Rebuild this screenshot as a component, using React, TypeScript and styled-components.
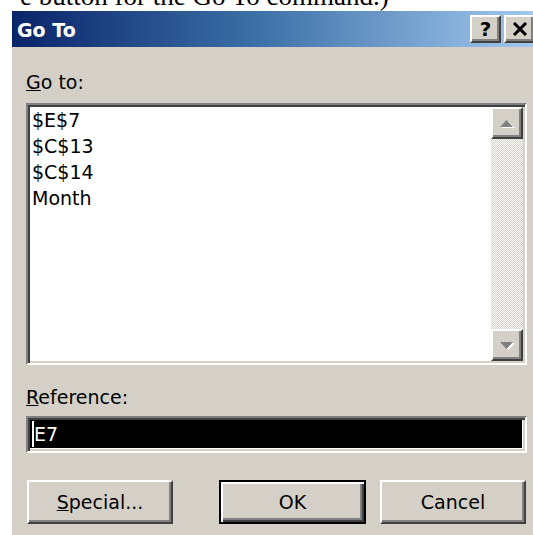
import styled, { createGlobalStyle } from "styled-components";

const GlobalStyle = createGlobalStyle`
  html, body {
    margin: 0;
    padding: 0;
    background: #ffffff;
    overflow: hidden;
  }
  body {
    width: 533px;
    height: 535px;
  }
`;

export default function App() {
    return (
        <>
            <GlobalStyle />
            <Caption>
                <CaptionText>e button for the Go To command.)</CaptionText>
            </Caption>
            <Dialog>
                <TitleBar>
                    <Title>Go To</Title>
                    <TitleButtons>
                        <CaptionButton aria-label="Help">?</CaptionButton>
                        <CaptionButton aria-label="Close">
                            <svg width="16" height="14" viewBox="0 0 16 14">
                                <path d="M2 1 L14 13 M14 1 L2 13" stroke="#000" strokeWidth="3" />
                            </svg>
                        </CaptionButton>
                    </TitleButtons>
                </TitleBar>
                <Body>
                    <Label><u>G</u>o to:</Label>
                    <ListBox>
                        <Items>
                            <Item>$E$7</Item>
                            <Item>$C$13</Item>
                            <Item>$C$14</Item>
                            <Item>Month</Item>
                        </Items>
                        <ScrollBar>
                            <ScrollButton>
                                <Arrow />
                            </ScrollButton>
                            <Track />
                            <ScrollButton>
                                <Arrow $down />
                            </ScrollButton>
                        </ScrollBar>
                    </ListBox>
                    <Label $top={19}><u>R</u>eference:</Label>
                    <RefField>
                        <Selection>
                            <Caret />
                            E7
                        </Selection>
                    </RefField>
                    <ButtonRow>
                        <PushButton><u>S</u>pecial...</PushButton>
                        <Spacer />
                        <PushButton $default>OK</PushButton>
                        <PushButton>Cancel</PushButton>
                    </ButtonRow>
                </Body>
            </Dialog>
        </>
    );
}

// greyed scroll arrow with its white emboss
const Arrow = ({ $down }: { $down?: boolean }) => (
    <svg width="16" height="9" viewBox="0 0 16 9">
        {$down ? (
            <>
                <path d="M3 2 H16 L9.5 9 Z" fill="#ffffff" />
                <path d="M1 1 H14 L7.5 8 Z" fill="#808080" />
            </>
        ) : (
            <>
                <path d="M2 9 H16 L9 2 Z" fill="#ffffff" />
                <path d="M1 8 H14 L7.5 1 Z" fill="#808080" />
            </>
        )}
    </svg>
);

const ui = `"DejaVu Sans", Verdana, sans-serif`;

const Caption = styled.div`
    height: 11px;
    overflow: hidden;
`;

const CaptionText = styled.div`
    margin: -17px 0 0 20px;
    font-family: "Liberation Serif", "Times New Roman", serif;
    font-size: 27px;
    line-height: 27px;
    color: #000;
    white-space: nowrap;
`;

const Dialog = styled.div`
    margin-left: 12px;
    width: 528px;
    height: 524px;
    background: #d4d0c8;
    font-family: ${ui};
    font-size: 19px;
    color: #000;
`;

const TitleBar = styled.div`
    height: 36px;
    display: flex;
    align-items: center;
    justify-content: space-between;
    padding: 0 5px 0 5px;
    background: linear-gradient(to right, #0a246a 0%, #3a6ea5 45%, #a6caf0 100%);
`;

const Title = styled.span`
    font-weight: bold;
    color: #ffffff;
    padding-top: 2px;
`;

const TitleButtons = styled.div`
    display: flex;
    gap: 3px;
`;

const raised = `
    background: #d4d0c8;
    border: 2px solid;
    border-color: #ffffff #404040 #404040 #ffffff;
    box-shadow: inset -2px -2px 0 #808080, inset 2px 2px 0 #d4d0c8;
`;

const sunken = `
    border: 2px solid;
    border-color: #808080 #ffffff #ffffff #808080;
    box-shadow: inset 2px 2px 0 #404040, inset -2px -2px 0 #d4d0c8;
`;

const CaptionButton = styled.div`
    ${raised}
    box-sizing: border-box;
    width: 31px;
    height: 28px;
    display: flex;
    align-items: center;
    justify-content: center;
    font-weight: bold;
    font-size: 20px;
`;

const Body = styled.div`
    padding: 22px 13px 0 14px;
`;

const Label = styled.div<{ $top?: number }>`
    line-height: 26px;
    margin-top: ${p => p.$top ?? 0}px;
`;

const ListBox = styled.div`
    ${sunken}
    box-sizing: border-box;
    margin-top: 8px;
    height: 262px;
    display: flex;
    background: #ffffff;
    padding: 2px;
`;

const Items = styled.ul`
    flex: 1;
    list-style: none;
    margin: 0;
    padding: 0 0 0 2px;
`;

const Item = styled.li`
    line-height: 26px;
`;

const ScrollBar = styled.div`
    width: 32px;
    display: flex;
    flex-direction: column;
`;

const ScrollButton = styled.div`
    ${raised}
    box-sizing: border-box;
    height: 32px;
    display: flex;
    align-items: center;
    justify-content: center;
`;

const Track = styled.div`
    flex: 1;
    background: repeating-conic-gradient(#d4d0c8 0 25%, #ffffff 0 50%) 0 0 / 2px 2px;
`;

const RefField = styled.div`
    ${sunken}
    box-sizing: border-box;
    margin-top: 6px;
    height: 37px;
    padding: 2px 3px 3px 2px;
    background: #ffffff;
    display: flex;
`;

const Selection = styled.div`
    flex: 1;
    background: #000000;
    color: #ffffff;
    display: flex;
    align-items: center;
    padding-left: 2px;
`;

const Caret = styled.span`
    width: 2px;
    height: 26px;
    background: #ffffff;
`;

const ButtonRow = styled.div`
    margin-top: 27px;
    display: flex;
    gap: 14px;
    padding: 0 1px;
`;

const Spacer = styled.div`
    flex: 1;
`;

const PushButton = styled.div<{ $default?: boolean }>`
    box-sizing: border-box;
    width: ${p => (p.$default ? 147 : 146)}px;
    height: 44px;
    display: flex;
    align-items: center;
    justify-content: center;
    ${p =>
        p.$default
            ? `
        background: #d4d0c8;
        border: 2px solid #000000;
        box-shadow: inset 2px 2px 0 #ffffff, inset -2px -2px 0 #404040, inset -4px -4px 0 #808080;
    `
            : raised}
`;
